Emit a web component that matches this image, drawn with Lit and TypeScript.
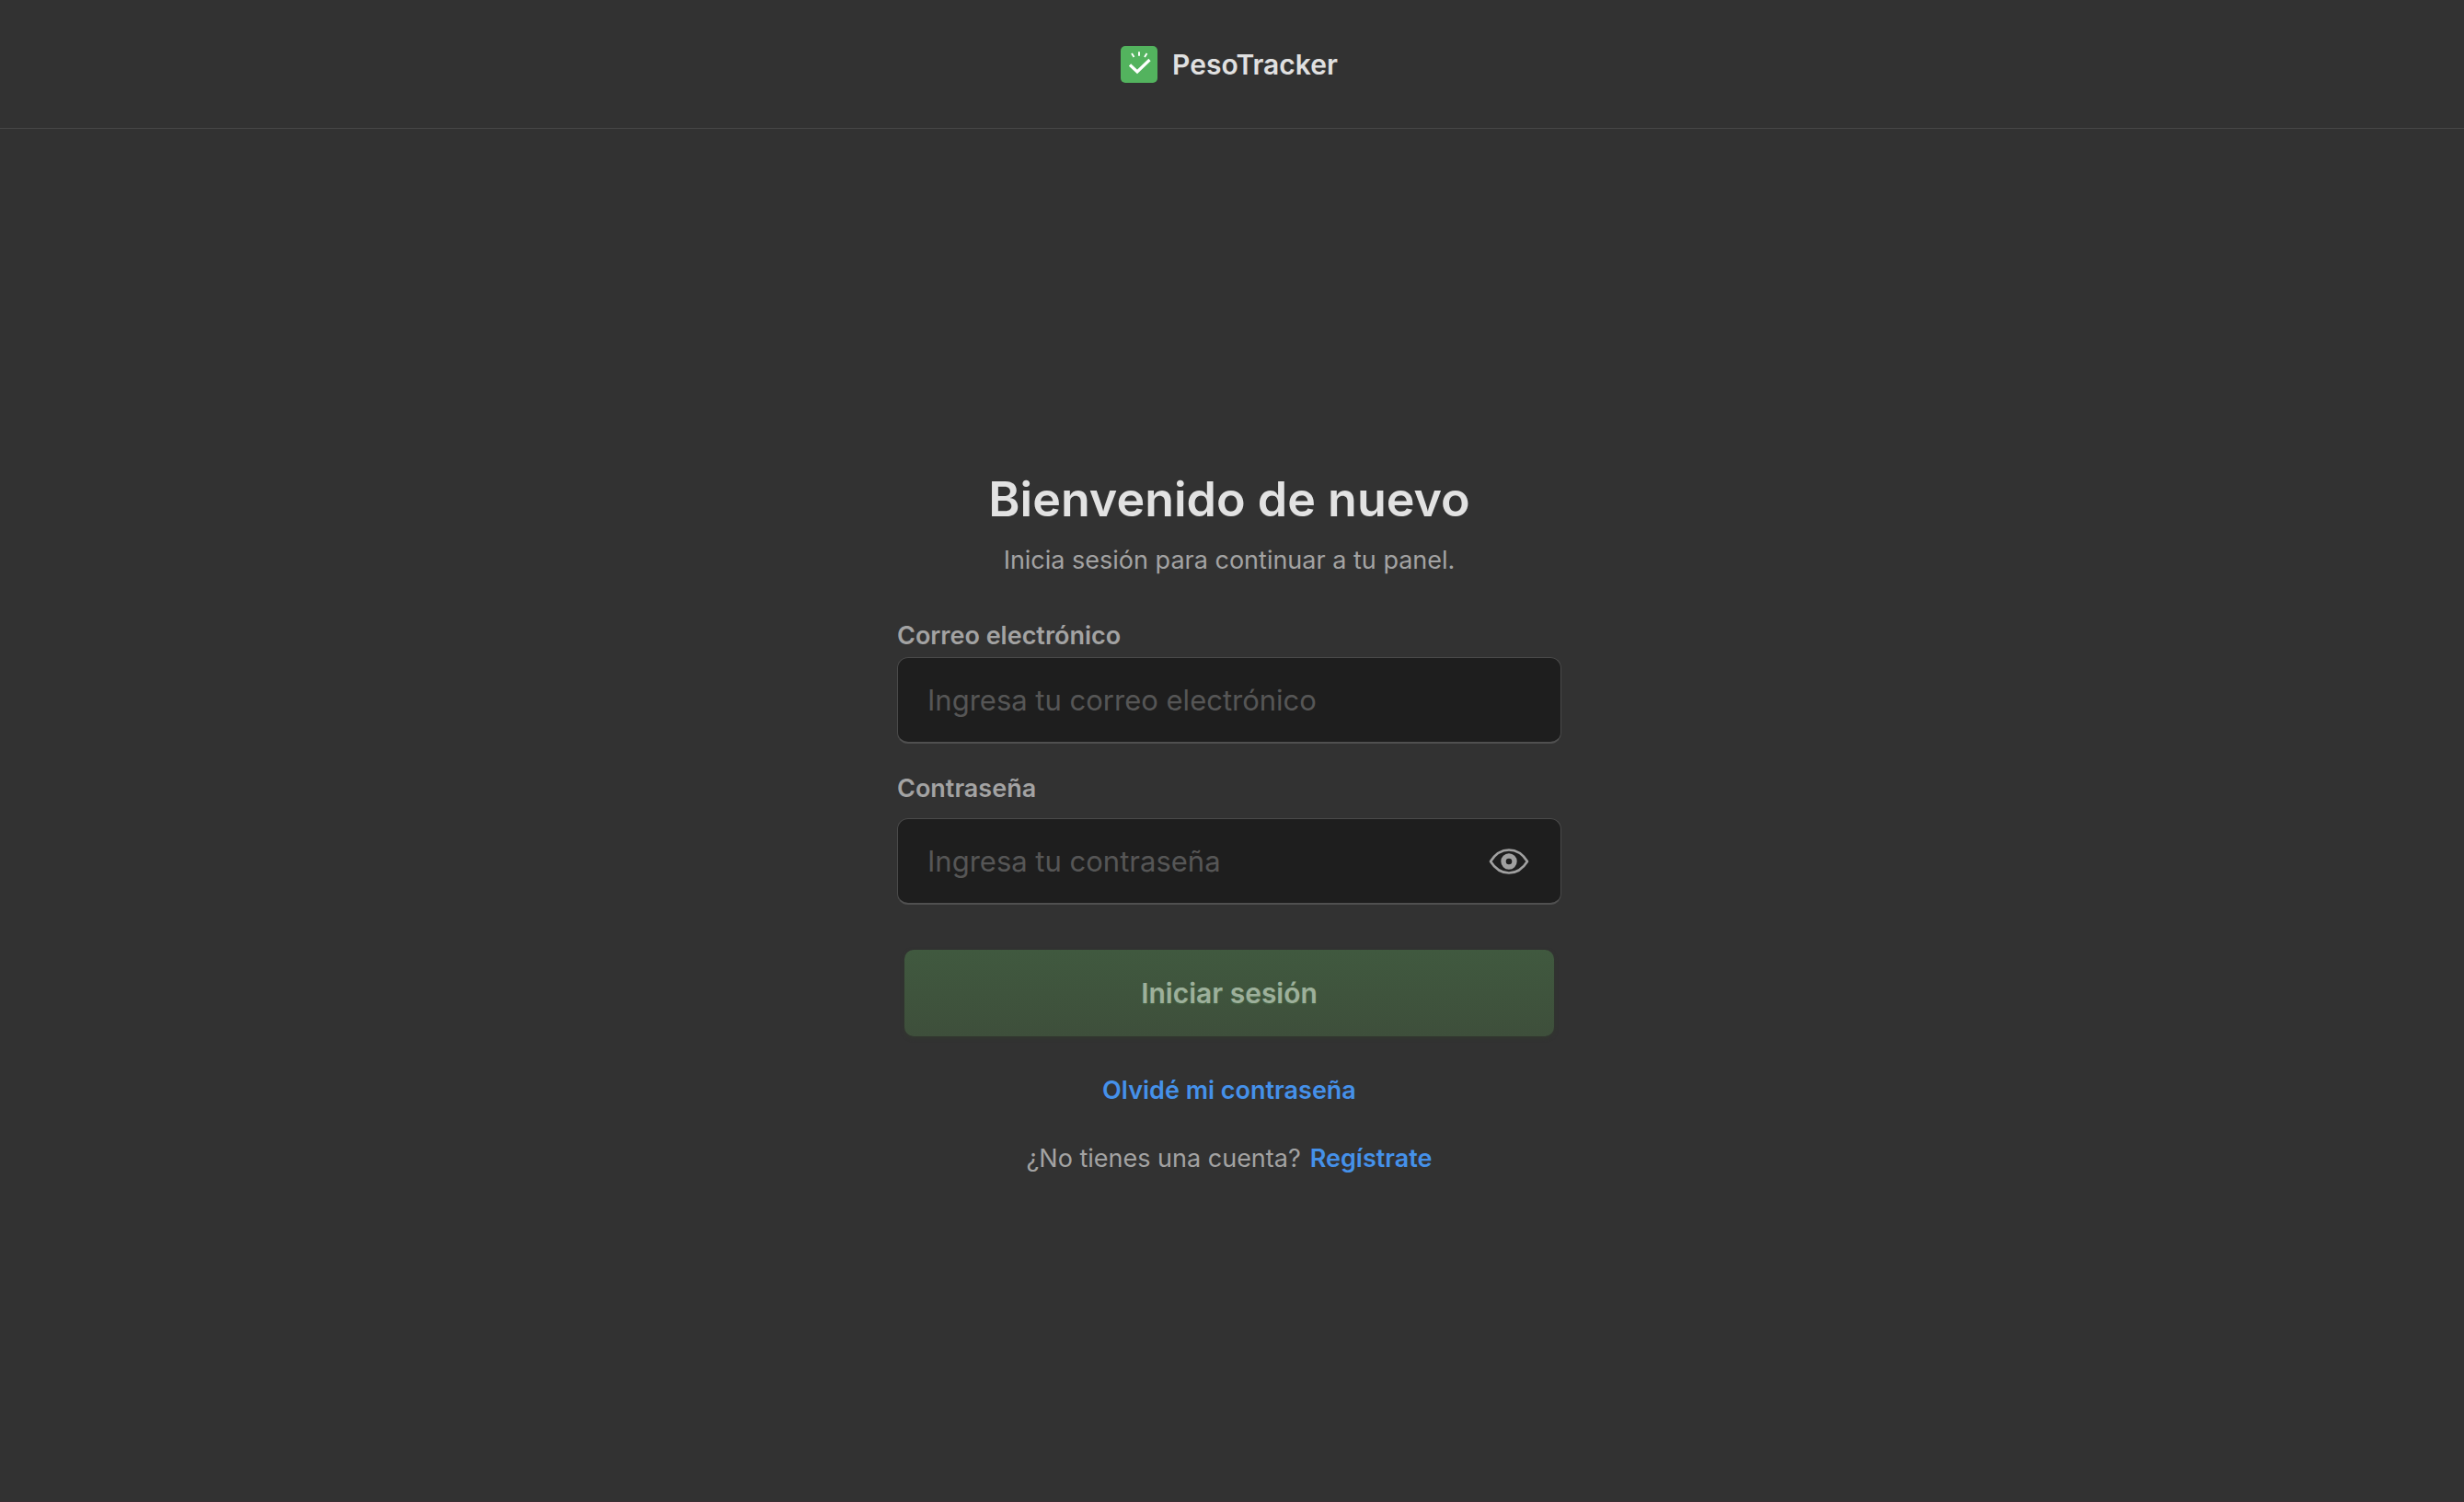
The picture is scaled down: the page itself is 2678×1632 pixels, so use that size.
import { LitElement, html, css } from "lit";
import { customElement, state } from "lit/decorators.js";

@customElement("app-logo")
class AppLogo extends LitElement {
  static styles = css`
    :host { display: block; width: 40px; height: 40px; }
    svg { display: block; width: 100%; height: 100%; }
  `;
  render() {
    return html`<svg viewBox="0 0 40 40" fill="none" stroke="#fff" aria-hidden="true">
      <rect width="40" height="40" rx="5" fill="#53b35e" stroke="none" />
      <path d="M10 20.500 L18 28 L31.500 15" stroke-width="3.200" />
      <path d="M12 8 L14.500 12 M20 6.300 V10.800 M28.500 8 L26 12" stroke-width="1.900" />
    </svg>`;
  }
}

@customElement("app-root")
class AppRoot extends LitElement {
  @state() private visible = false;

  static styles = css`
    :host {
      display: flex;
      flex-direction: column;
      box-sizing: border-box;
      min-height: 100vh;
      background: #323232;
      border-bottom: 1px solid #3a2e34;
      color: #a3a3a3;
      font-family: Inter, "Liberation Sans", sans-serif;
      font-size: 27px;
      line-height: 36px;
    }
    * { box-sizing: border-box; }
    .bar {
      display: flex;
      align-items: center;
      justify-content: center;
      gap: 16px;
      height: 140px;
      padding-right: 6px;
      border-bottom: 1px solid #464646;
    }
    .brand { color: #e0e0e0; font-size: 30px; font-weight: 600; }
    .page {
      flex: 1;
      display: flex;
      flex-direction: column;
      align-items: center;
      justify-content: center;
      padding: 17px 6px 0 0;
    }
    .form { display: flex; flex-direction: column; width: 100%; max-width: 722px; }
    h1 {
      margin: 0;
      color: #e2e2e2;
      font-size: 52px;
      line-height: 64px;
      font-weight: 600;
      text-align: center;
    }
    .lead { margin: 16px 0 46px; text-align: center; }
    label { font-weight: 600; }
    .field { display: flex; margin: 5px 0 31px; }
    .field.secret { margin: 14px 0 49px; }
    .box {
      display: flex;
      align-items: center;
      flex: 1;
      height: 94px;
      padding: 0 34px 0 32px;
      background: #1e1e1e;
      border: 1px solid #4a4a4a;
      border-bottom: 2px solid #505050;
      border-radius: 12px;
    }
    input {
      flex: 1;
      min-width: 0;
      height: 100%;
      padding: 0;
      border: 0;
      outline: 0;
      background: none;
      color: #e2e2e2;
      font: inherit;
      font-size: 31px;
    }
    input::placeholder { color: #565656; opacity: 1; }
    .eye { padding: 0; border: 0; background: none; color: #a0a0a0; }
    .eye svg { display: block; width: 44px; height: 32px; }
    .submit {
      height: 94px;
      margin: 0 8px 41px;
      border: 0;
      border-radius: 10px;
      background: linear-gradient(#40593f, #3e4f3b);
      box-shadow: 0 2px 4px #32382f;
      color: #9db09b;
      font: inherit;
      font-size: 30px;
      font-weight: 600;
      text-shadow: 0 1px 2px #4a6a48;
    }
    a { color: #4591ea; font-weight: 600; text-decoration: none; }
    .links { display: flex; flex-direction: column; align-items: center; gap: 38px; }
    .signup { display: flex; gap: 10px; }
  `;

  render() {
    return html`
      <header class="bar"><app-logo></app-logo><span class="brand">PesoTracker</span></header>
      <main class="page">
        <form class="form" @submit=${(e: Event) => e.preventDefault()}>
          <h1>Bienvenido de nuevo</h1>
          <p class="lead">Inicia sesión para continuar a tu panel.</p>
          <label for="email">Correo electrónico</label>
          <div class="field">
            <div class="box"><input id="email" type="email" placeholder="Ingresa tu correo electrónico" /></div>
          </div>
          <label for="password">Contraseña</label>
          <div class="field secret">
            <div class="box">
              <input id="password" type=${this.visible ? "text" : "password"} placeholder="Ingresa tu contraseña" />
              <button class="eye" type="button" aria-label="Mostrar contraseña" @click=${() => (this.visible = !this.visible)}>
                <svg viewBox="0 0 44 32" fill="none" stroke="currentColor" aria-hidden="true">
                  <path d="M2 16 C7 8 14 3.500 22 3.500 S37 8 42 16 C37 24 30 28.500 22 28.500 S7 24 2 16 Z" stroke-width="2.600" stroke-linejoin="round" />
                  <circle cx="22" cy="16" r="6" stroke-width="5.400" />
                </svg>
              </button>
            </div>
          </div>
          <button class="submit" type="submit">Iniciar sesión</button>
          <div class="links">
            <a href="#recuperar">Olvidé mi contraseña</a>
            <div class="signup"><span>¿No tienes una cuenta?</span><a href="#registro">Regístrate</a></div>
          </div>
        </form>
      </main>
    `;
  }
}
